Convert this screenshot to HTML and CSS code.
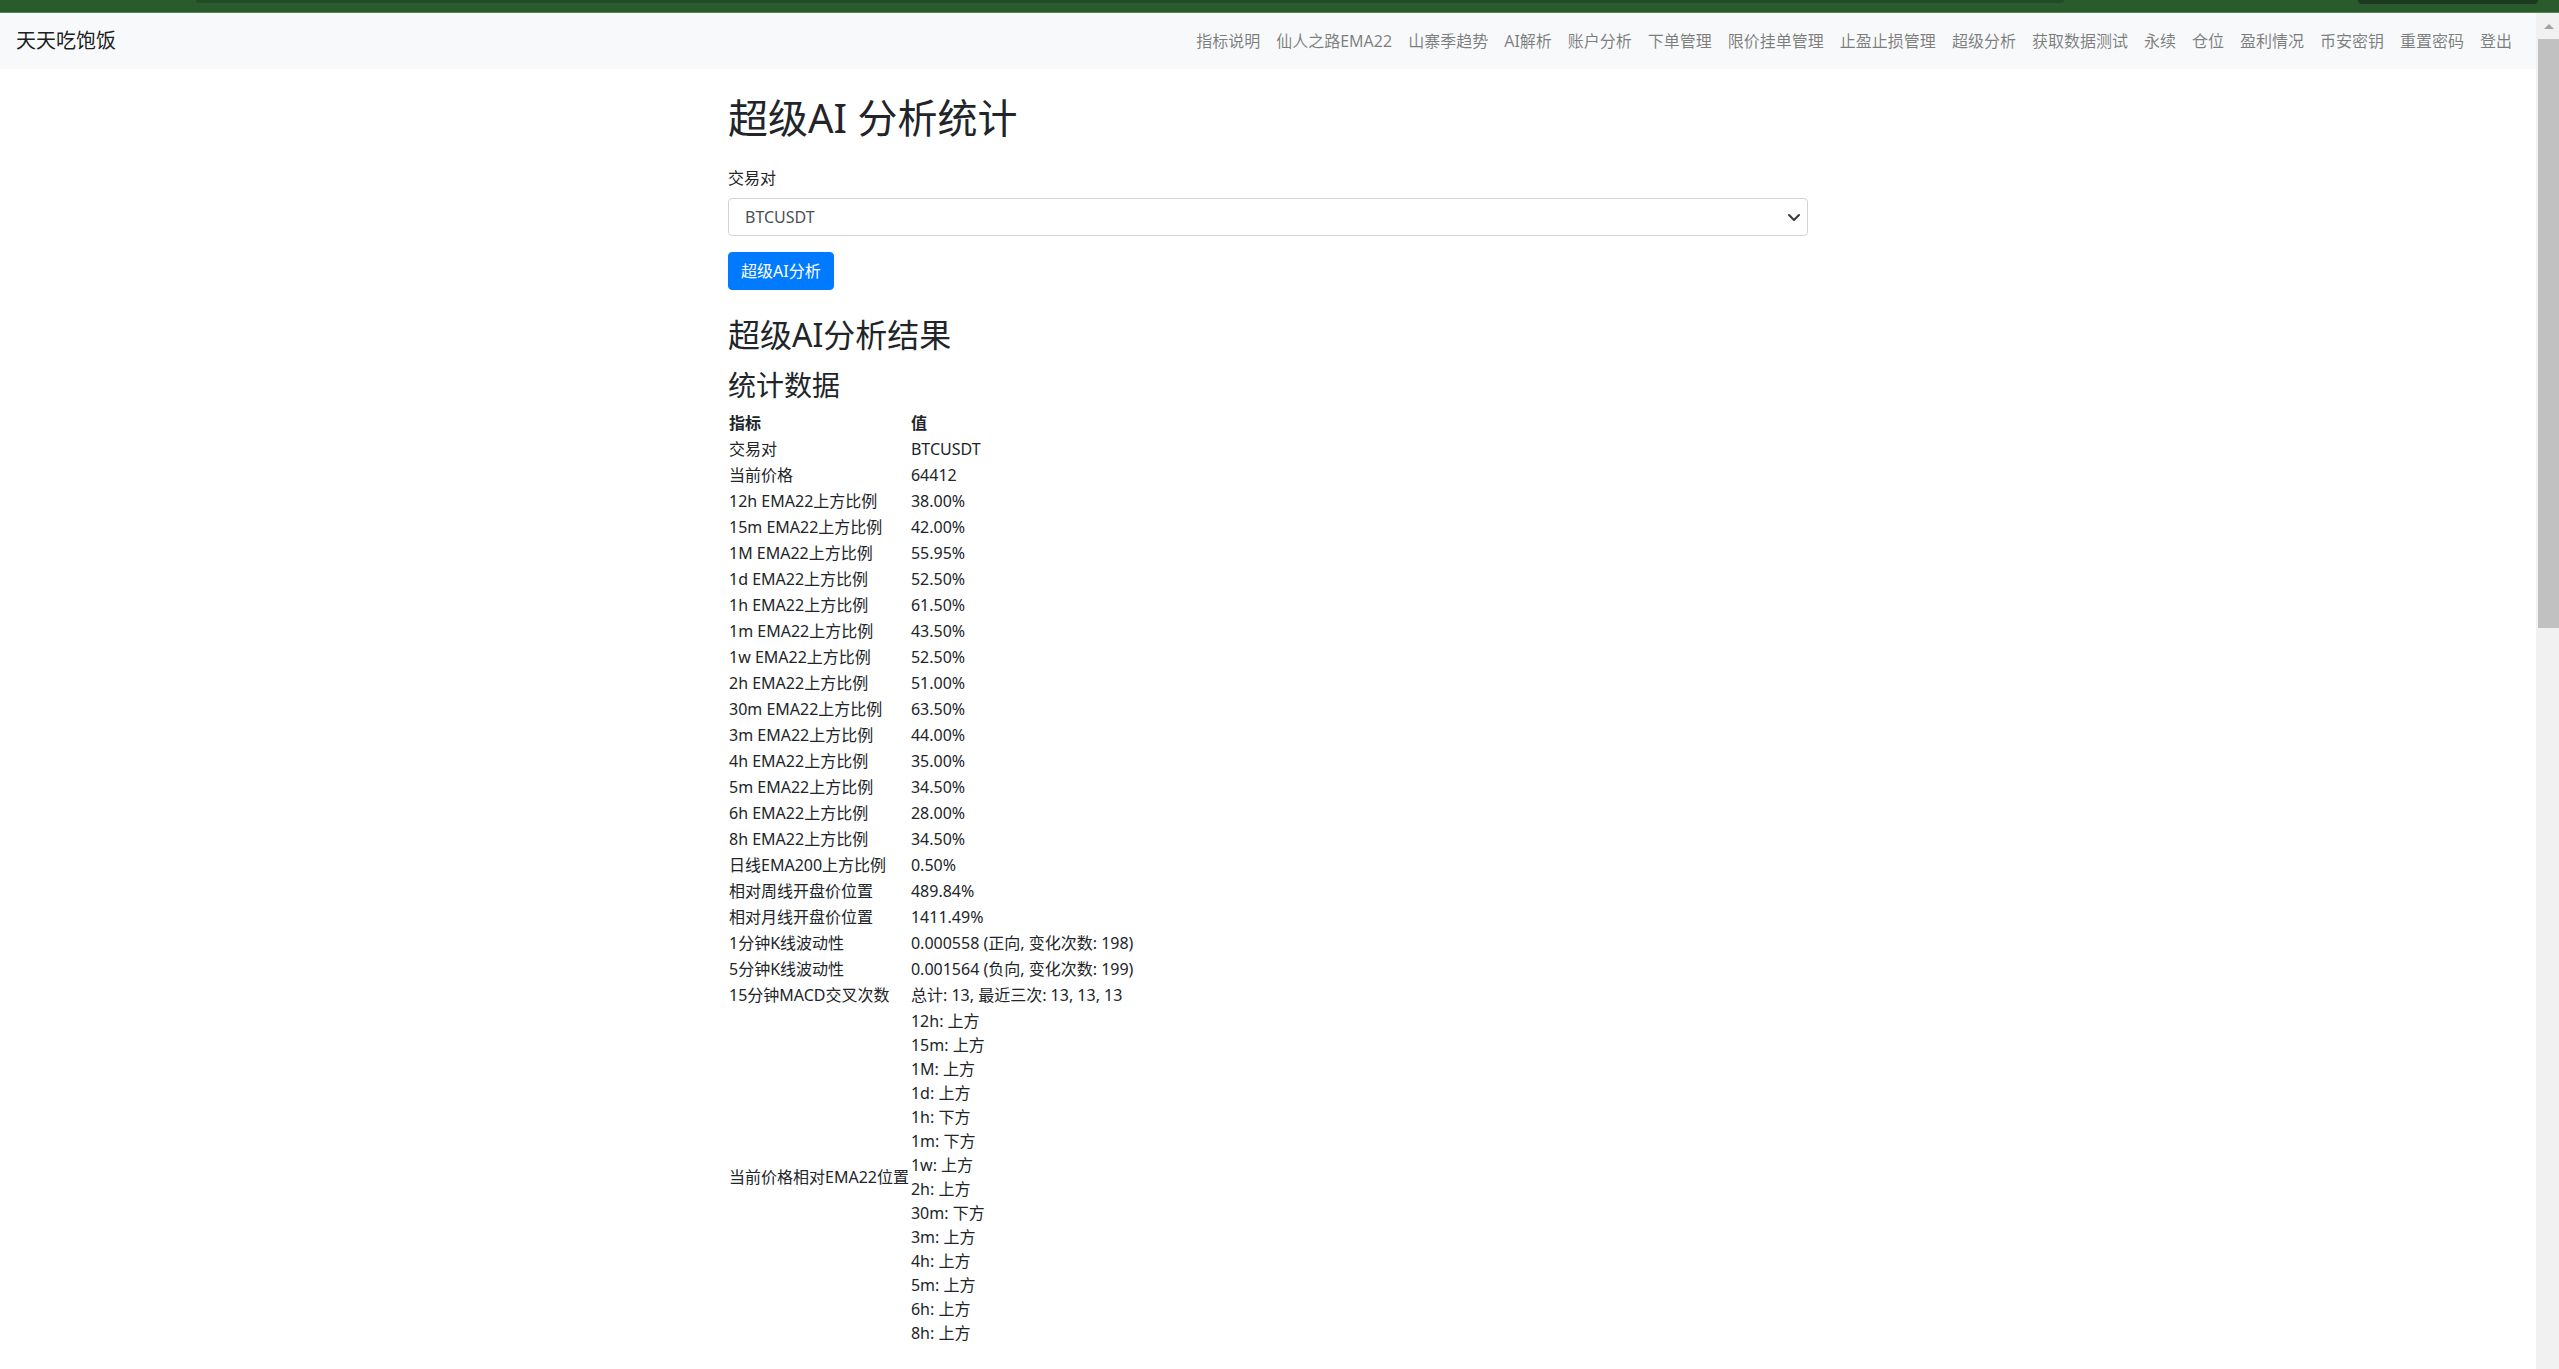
FILE: index.html
```html
<!DOCTYPE html>
<html lang="zh-CN">
<head>
<meta charset="utf-8">
<title>超级AI 分析统计</title>
<link rel="stylesheet" href="styles.css">
</head>
<body>
<div class="topbar"><span class="tab tab-a"></span><span class="tab tab-b"></span></div>
<div class="frame">
  <div class="page">
    <nav class="navbar">
      <a class="brand" href="#">天天吃饱饭</a>
      <ul class="nav-links">
        <li><a href="#">指标说明</a></li>
        <li><a href="#">仙人之路EMA22</a></li>
        <li><a href="#">山寨季趋势</a></li>
        <li><a href="#">AI解析</a></li>
        <li><a href="#">账户分析</a></li>
        <li><a href="#">下单管理</a></li>
        <li><a href="#">限价挂单管理</a></li>
        <li><a href="#">止盈止损管理</a></li>
        <li><a href="#">超级分析</a></li>
        <li><a href="#">获取数据测试</a></li>
        <li><a href="#">永续</a></li>
        <li><a href="#">仓位</a></li>
        <li><a href="#">盈利情况</a></li>
        <li><a href="#">币安密钥</a></li>
        <li><a href="#">重置密码</a></li>
        <li><a href="#">登出</a></li>
      </ul>
    </nav>
    <main class="container">
      <h1>超级AI 分析统计</h1>
      <form class="analysis-form">
        <div class="form-group">
          <label for="symbol">交易对</label>
          <div class="select-wrap">
            <select id="symbol"><option>BTCUSDT</option></select>
            <svg class="chevron" width="16" height="12" viewBox="0 0 16 12"><path d="M3 4 L8 9 L13 4" fill="none" stroke="#343a40" stroke-width="2" stroke-linecap="round" stroke-linejoin="round"/></svg>
          </div>
        </div>
        <button type="button" class="btn-primary">超级AI分析</button>
      </form>
      <section class="results">
        <h2>超级AI分析结果</h2>
        <h3>统计数据</h3>
        <table class="stats">
          <thead>
            <tr><th>指标</th><th>值</th></tr>
          </thead>
          <tbody>
            <tr><td>交易对</td><td>BTCUSDT</td></tr>
            <tr><td>当前价格</td><td>64412</td></tr>
            <tr><td>12h EMA22上方比例</td><td>38.00%</td></tr>
            <tr><td>15m EMA22上方比例</td><td>42.00%</td></tr>
            <tr><td>1M EMA22上方比例</td><td>55.95%</td></tr>
            <tr><td>1d EMA22上方比例</td><td>52.50%</td></tr>
            <tr><td>1h EMA22上方比例</td><td>61.50%</td></tr>
            <tr><td>1m EMA22上方比例</td><td>43.50%</td></tr>
            <tr><td>1w EMA22上方比例</td><td>52.50%</td></tr>
            <tr><td>2h EMA22上方比例</td><td>51.00%</td></tr>
            <tr><td>30m EMA22上方比例</td><td>63.50%</td></tr>
            <tr><td>3m EMA22上方比例</td><td>44.00%</td></tr>
            <tr><td>4h EMA22上方比例</td><td>35.00%</td></tr>
            <tr><td>5m EMA22上方比例</td><td>34.50%</td></tr>
            <tr><td>6h EMA22上方比例</td><td>28.00%</td></tr>
            <tr><td>8h EMA22上方比例</td><td>34.50%</td></tr>
            <tr><td>日线EMA200上方比例</td><td>0.50%</td></tr>
            <tr><td>相对周线开盘价位置</td><td>489.84%</td></tr>
            <tr><td>相对月线开盘价位置</td><td>1411.49%</td></tr>
            <tr><td>1分钟K线波动性</td><td>0.000558 (正向, 变化次数: 198)</td></tr>
            <tr><td>5分钟K线波动性</td><td>0.001564 (负向, 变化次数: 199)</td></tr>
            <tr><td>15分钟MACD交叉次数</td><td>总计: 13, 最近三次: 13, 13, 13</td></tr>
            <tr>
              <td>当前价格相对EMA22位置</td>
              <td>
                <div>12h: 上方</div>
                <div>15m: 上方</div>
                <div>1M: 上方</div>
                <div>1d: 上方</div>
                <div>1h: 下方</div>
                <div>1m: 下方</div>
                <div>1w: 上方</div>
                <div>2h: 上方</div>
                <div>30m: 下方</div>
                <div>3m: 上方</div>
                <div>4h: 上方</div>
                <div>5m: 上方</div>
                <div>6h: 上方</div>
                <div>8h: 上方</div>
              </td>
            </tr>
          </tbody>
        </table>
      </section>
    </main>
  </div>
  <div class="scrollbar">
    <div class="arrow-up"></div>
    <div class="thumb"></div>
  </div>
</div>
</body>
</html>
```
FILE: styles.css
```css
* { box-sizing: border-box; }

html, body {
  margin: 0;
  height: 100%;
}

body {
  display: flex;
  flex-direction: column;
  overflow: hidden;
  font-family: "Noto Sans", "Noto Sans CJK SC", sans-serif;
  font-size: 16px;
  line-height: 1.5;
  color: #212529;
  background: #fff;
}

.topbar {
  flex: 0 0 13px;
  display: flex;
  align-items: flex-start;
  background: #2a5b2c;
  border-bottom: 1px solid #55835a;
}

.tab {
  display: block;
  border-radius: 0 0 6px 6px;
}

.tab-a {
  margin-left: 196px;
  width: 1868px;
  height: 3px;
  background: #244b29;
}

.tab-b {
  margin-left: 294px;
  width: 180px;
  height: 4px;
  background: #1b3a1f;
}

.frame {
  flex: 1;
  display: flex;
  min-height: 0;
}

.page {
  flex: 1;
  overflow: hidden;
}

.scrollbar {
  flex: 0 0 23px;
  background: #f1f1f1;
  display: flex;
  flex-direction: column;
  align-items: flex-end;
}

.arrow-up {
  margin: 11px 5px 0 0;
  width: 0;
  height: 0;
  border-left: 5px solid transparent;
  border-right: 5px solid transparent;
  border-bottom: 5px solid #a3a3a3;
}

.thumb {
  margin-top: 10px;
  width: 21px;
  height: 589px;
  background: #c1c1c1;
}

/* navbar */
.navbar {
  display: flex;
  align-items: center;
  justify-content: space-between;
  padding: 8px 16px;
  background: #f8f9fa;
}

.brand {
  font-size: 20px;
  line-height: 30px;
  padding: 5px 0;
  margin-right: 16px;
  color: rgba(0, 0, 0, 0.9);
  text-decoration: none;
}

.nav-links {
  display: flex;
  list-style: none;
  margin: 0;
  padding: 0;
}

.nav-links a {
  display: block;
  padding: 8px;
  line-height: 24px;
  color: rgba(0, 0, 0, 0.5);
  text-decoration: none;
}

/* content */
.container {
  width: 1080px;
  margin: 0 auto;
  padding-top: 25px;
}

h1, h2, h3 {
  font-weight: 400;
  line-height: 1.2;
}

h1 {
  font-size: 40px;
  margin: 0 0 24px;
}

h2 {
  font-size: 32px;
  margin: 0 0 8px;
}

h3 {
  font-size: 28px;
  margin: 15px 0 7px;
}

.form-group {
  margin-bottom: 16px;
}

.form-group label {
  display: inline-block;
  margin-bottom: 8px;
}

.select-wrap {
  position: relative;
}

.select-wrap select {
  display: block;
  width: 100%;
  height: 38px;
  padding: 6px 28px 6px 16px;
  font-family: inherit;
  font-size: 16px;
  line-height: 24px;
  color: #495057;
  background: #fff;
  border: 1px solid #ced4da;
  border-radius: 4px;
  -webkit-appearance: none;
  appearance: none;
}

.chevron {
  position: absolute;
  right: 6px;
  top: 13px;
}

.btn-primary {
  display: inline-block;
  padding: 6px 12px;
  font-family: inherit;
  font-size: 16px;
  line-height: 24px;
  color: #fff;
  background: #007bff;
  border: 1px solid #007bff;
  border-radius: 4px;
}

.results {
  margin-top: 26px;
}

.stats {
  border-collapse: collapse;
}

.stats th,
.stats td {
  padding: 1px;
  text-align: left;
  vertical-align: middle;
}

.stats th {
  font-weight: bold;
}
```
